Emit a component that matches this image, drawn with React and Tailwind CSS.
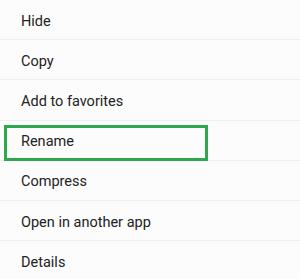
const items = [
  "Hide",
  "Copy",
  "Add to favorites",
  "Rename",
  "Compress",
  "Open in another app",
  "Details",
];

export default function App() {
  return (
    <div
      className="w-[300px] h-[279px] overflow-hidden bg-[#fcfcfc]"
      style={{ fontFamily: "Roboto, 'Liberation Sans', sans-serif" }}
    >
      {items.map((label) => (
        <div
          key={label}
          className="relative h-[40.2px] flex items-center pl-[21px] pt-[4px] border-b border-[#efefef] text-[14.5px] text-[#222]"
        >
          {label === "Rename" && (
            <div className="absolute left-[4px] top-[4px] w-[204px] h-[36px] border-[3px] border-[#2ea84d]" />
          )}
          <span className="relative">{label}</span>
        </div>
      ))}
    </div>
  );
}
